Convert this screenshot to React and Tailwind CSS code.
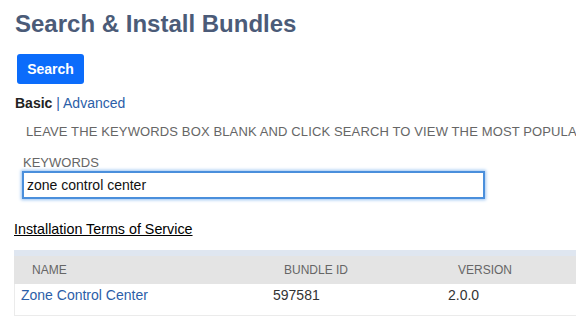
export default function App() {
  return (
    <div className="w-[576px] h-[336px] overflow-hidden bg-white font-['Liberation_Sans',Arial,sans-serif]">
      <h1 className="ml-[15px] pt-[10px] text-[24px] leading-[28px] font-bold text-[#4b5b78] whitespace-nowrap">
        Search &amp; Install Bundles
      </h1>
      <div className="ml-[17px] mt-[16px]">
        <button className="block h-[30px] w-[67px] rounded-[3px] bg-[#0b6cfb] text-[14px] font-bold text-white">
          Search
        </button>
      </div>
      <div className="ml-[15px] mt-[9px] text-[14px] leading-[20px] text-[#222]">
        <span className="font-bold">Basic</span>
        <span className="text-[#2b5ea8]"> | Advanced</span>
      </div>
      <div className="ml-[26px] mt-[11px] overflow-hidden text-[13px] leading-[16px] tracking-[0.13px] text-[#666] whitespace-nowrap">
        LEAVE THE KEYWORDS BOX BLANK AND CLICK SEARCH TO VIEW THE MOST POPULAR BUNDLES
      </div>
      <div className="ml-[23px] mt-[15px] text-[13px] leading-[16px] text-[#666]">KEYWORDS</div>
      <div className="ml-[22px]">
        <input
          readOnly
          value="zone control center"
          className="block h-[28px] w-[463px] border-2 border-[#4a8fdc] pl-[3px] text-[14px] text-[#111] outline-none shadow-[0_0_3px_1px_#9cc4f2] font-['Liberation_Sans',Arial,sans-serif]"
        />
      </div>
      <div className="ml-[14px] mt-[20px] text-[14.3px] leading-[20px] text-black underline">
        Installation Terms of Service
      </div>
      <div className="ml-[14px] mt-[11px] w-[620px]">
        <div className="h-[6px] bg-[#dfe6f0]" />
        <div className="grid h-[28px] grid-cols-[252px_175px_1fr] items-center bg-[#e4e4e4] text-[12px] text-[#666]">
          <div className="pl-[18px]">NAME</div>
          <div className="pl-[18px]">BUNDLE ID</div>
          <div className="pl-[17px]">VERSION</div>
        </div>
        <div className="grid h-[32px] grid-cols-[252px_175px_1fr] items-start border-b border-l border-[#ebebeb] pt-[1px] text-[14px] leading-[20px] text-[#333]">
          <div className="pl-[6px] text-[#2b5ea8]">Zone Control Center</div>
          <div className="pl-[6px]">597581</div>
          <div className="pl-[6px]">2.0.0</div>
        </div>
      </div>
    </div>
  );
}
